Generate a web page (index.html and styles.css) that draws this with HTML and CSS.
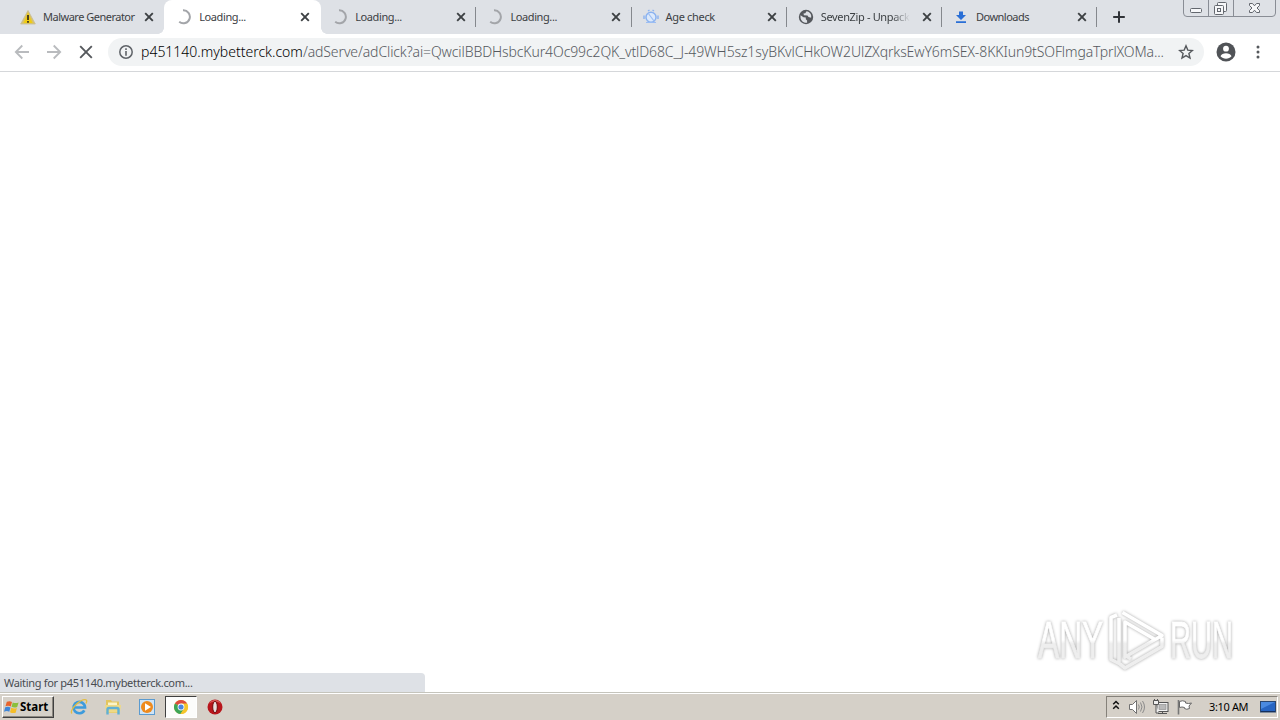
FILE: index.html
```
<!DOCTYPE html>
<html>
<head>
    <title>Loading...</title>
    <meta charset="utf-8">
    <meta name="viewport" content="width=device-width, initial-scale=1">
    <link rel="stylesheet" href="styles.css">
</head>

<body>
    <svg width="0" height="0" class="defs">
        <symbol id="close" viewBox="0 0 10 10"><path d="M1.2 1.2l7.6 7.6M8.8 1.2l-7.6 7.6" stroke="#3c4043" stroke-width="1.9"/></symbol>
        <symbol id="spinner" viewBox="0 0 16 16"><path d="M7 1.3A6.5 6.5 0 1 1 3.2 12.8" fill="none" stroke="#a3a5a9" stroke-width="2"/></symbol>
        <linearGradient id="wm-fill" x1="0" y1="0" x2="0" y2="62" gradientUnits="userSpaceOnUse">
            <stop offset=".5" stop-color="#ffffff"/>
            <stop offset=".56" stop-color="#eeeeee"/>
        </linearGradient>
    </svg>

    <div class="tabstrip">
        <div class="tab no-line">
            <svg class="favicon" viewBox="0 0 16 16"><path d="M8 1.5L15.3 15H.7z" fill="#d9c36a" stroke="#c8bd92" stroke-width=".8"/><path d="M8 3.5L12.5 14h-9z" fill="#f0cc12"/><path d="M8 6v5M8 12v1.7" stroke="#3d3520" stroke-width="1.8"/></svg>
            <span class="title malware">Malware Generator</span>
            <svg class="close"><use href="#close"/></svg>
        </div>
        <div class="tab active no-line">
            <svg class="favicon"><use href="#spinner"/></svg>
            <span class="title loading">Loading...</span>
            <svg class="close"><use href="#close"/></svg>
        </div>
        <div class="tab">
            <svg class="favicon"><use href="#spinner"/></svg>
            <span class="title loading">Loading...</span>
            <svg class="close"><use href="#close"/></svg>
        </div>
        <div class="tab">
            <svg class="favicon"><use href="#spinner"/></svg>
            <span class="title loading">Loading...</span>
            <svg class="close"><use href="#close"/></svg>
        </div>
        <div class="tab">
            <svg class="favicon" viewBox="0 0 16 16"><circle cx="8" cy="8.300" r="5" fill="#dce9fb" stroke="#8ab2f0" stroke-width="1.5"/><path d="M5 4l6 8M3 13.500h10" stroke="#9bbdf3" stroke-width="1.2"/><path d="M1 6.500v3.500M15 6.500v3.500M5 2l1.500-1M11 2L9.500 1" stroke="#8ab2f0" stroke-width="1.4"/></svg>
            <span class="title age">Age check</span>
            <svg class="close"><use href="#close"/></svg>
        </div>
        <div class="tab">
            <svg class="favicon" viewBox="0 0 16 16"><circle cx="8" cy="8" r="7.2" fill="#55585d"/><path d="M2.5 6.2l3 2.1 2.3.3v1.7l1.3 1.2v2.3C5 14.2 2 11.2 2.5 6.2zM8.5 2.2l-1.2 2-1.8.3.4 1.7 3.6.2 1 1.6 2.6.7C14 5.5 11.8 2.8 8.5 2.2z" fill="#dee1e6"/></svg>
            <span class="title fade">SevenZip - Unpack</span>
            <svg class="close"><use href="#close"/></svg>
        </div>
        <div class="tab">
            <svg class="favicon" viewBox="0 0 16 16"><path d="M6 2.5h4V6h3l-5 5L3 6h3zM3 12.2h10V14H3z" fill="#2a6fd6"/></svg>
            <span class="title down">Downloads</span>
            <svg class="close"><use href="#close"/></svg>
        </div>
        <svg class="new-tab" viewBox="0 0 12 12"><path d="M6 .2v11.6M.2 6h11.6" stroke="#303338" stroke-width="2"/></svg>
        <svg class="window-buttons" viewBox="0 0 94 18">
            <path d="M.5 0v13q0 3.500 3.500 3.500h85q3.500 0 3.500-3.500V0M25.500 0v16M50.500 0v16" fill="none" stroke="#898d95"/>
            <g fill="#f6f7f9" stroke="#63676e">
                <rect x="7.500" y="8.500" width="11" height="4" rx="1"/>
                <rect x="34.500" y="2.500" width="9" height="9" rx="1"/>
                <rect x="31.500" y="5.500" width="9" height="9" rx="1"/>
                <rect x="34.500" y="8.500" width="3" height="3"/>
                <path d="M66.500 3.500h3l2 2.300 2-2.300h3v2L74 8l2.500 2.500v2h-3l-2-2.300-2 2.300h-3v-2L69 8l-2.500-2.500z"/>
            </g>
        </svg>
    </div>

    <div class="toolbar">
        <svg class="nav" viewBox="0 0 16 16"><path d="M15 8H2M8.300 1.500L1.800 8l6.500 6.500" fill="none" stroke="#b9bbbe" stroke-width="1.800"/></svg>
        <svg class="nav" viewBox="0 0 16 16"><path d="M1 8h13M7.700 1.500L14.200 8l-6.500 6.500" fill="none" stroke="#b9bbbe" stroke-width="1.800"/></svg>
        <svg class="nav" viewBox="0 0 16 16"><path d="M2.200 2.200l11.600 11.600M13.800 2.200L2.200 13.800" stroke="#55585c" stroke-width="1.900"/></svg>
        <div class="omnibox">
            <svg class="info" viewBox="0 0 16 16"><circle cx="8" cy="8" r="6.200" fill="none" stroke="#5f6368" stroke-width="1.500"/><path d="M8 4.300v1.600M8 7v4.700" stroke="#5f6368" stroke-width="1.600"/></svg>
            <div class="url"><span class="host">p451140.mybetterck.com</span><span class="path">/adServe/adClick?ai=QwcilBBDHsbcKur4Oc99c2QK_vtlD68C_J-49WH5sz1syBKvlCHkOW2UlZXqrksEwY6mSEX-8KKIun9tSOFlmgaTprlXOMa...</span></div>
            <svg class="star" viewBox="0 0 16 16"><path d="M8 1.800l1.800 4.300 4.600.4-3.500 3 1.100 4.500L8 11.600 4 14l1.100-4.500-3.500-3 4.600-.4z" fill="none" stroke="#55585c" stroke-width="1.400"/></svg>
        </div>
        <svg class="avatar" viewBox="0 0 20 20"><circle cx="10" cy="10" r="9.500" fill="#505357"/><circle cx="10" cy="6.700" r="2.900" fill="#fff"/><path d="M4.500 14.200c1.200-4 9.800-4 11 0-2.600 3.300-8.400 3.300-11 0z" fill="#fff"/></svg>
        <svg class="menu" viewBox="0 0 4 16"><g fill="#55585c"><circle cx="2" cy="3" r="1.500"/><circle cx="2" cy="8" r="1.500"/><circle cx="2" cy="13" r="1.500"/></g></svg>
    </div>

    <div class="page">
        <div class="watermark">
            <span class="wm-text any">ANY</span>
            <svg class="wm-logo" viewBox="0 0 58 62"><path d="M14.500 3.500L54 26.500 17 48V13l31 18M9 6l-6 2.500v42l8 4V9M12 55l5 4 37-21.500v-9M17 46l6 4" fill="none" stroke="url(#wm-fill)" stroke-width="3.600" stroke-linejoin="round"/></svg>
            <span class="wm-text run">RUN</span>
        </div>
        <div class="status"><span>Waiting for p451140.mybetterck.com...</span></div>
    </div>

    <div class="taskbar">
        <div class="start">
            <svg viewBox="0 0 17 16"><path d="M3 2.500q3-1.500 5.500.2L7.200 7.500Q4.500 6 1.600 7.300z" fill="#e8642c"/><path d="M9.300 3.100q3 1.500 6.200 0L14 8q-3 1.300-6-.2z" fill="#8bbf3c"/><path d="M1.300 8.300q3-1.300 5.600.2L5.600 13Q3 11.600 0 13z" fill="#3f86d8"/><path d="M7.700 8.900q3 1.400 6 .1L12.400 14q-3 1-6-.5z" fill="#f5bd28"/></svg>
            <b>Start</b>
        </div>
        <svg class="launch ie" viewBox="0 0 18 18"><path d="M14.300 12.300A5.700 5.700 0 1 1 15 9.500H4.500" fill="none" stroke="#3d9bdc" stroke-width="2.700"/><path d="M2 15.500C-1.500 12.500 10.500.5 16 1.800c1.300.5.700 2.200 0 3.700" fill="none" stroke="#e2bd42" stroke-width="1.300"/></svg>
        <svg class="launch" viewBox="0 0 18 18"><path d="M2 2h5l1 1.500h7V15H2z" fill="#e3c55e"/><path d="M4 4.500h9v3H4z" fill="#fbf4c9"/><path d="M1 7h16l-1 7.500H2z" fill="#eed985"/><path d="M3.500 16.500v-5q0-1.500 1.500-1.500h8q1.500 0 1.500 1.500v5" fill="none" stroke="#5fb0d6" stroke-width="2.400"/></svg>
        <svg class="launch" viewBox="0 0 18 18"><rect x="1.500" y="1.500" width="15" height="15" fill="#cfe4f6" stroke="#5b9bd0"/><circle cx="9" cy="9" r="6" fill="#ee8a1d"/><path d="M7 5.300v7.400L13 9z" fill="#fff"/></svg>
        <div class="running">
            <svg viewBox="0 0 16 16"><circle cx="8" cy="8" r="7" fill="#f5c52c"/><path d="M8 8L1.900 4.500A7 7 0 0 1 14.100 4.500H8z" fill="#dd4b3e"/><path d="M8 8L1.900 4.500A7 7 0 0 0 7.500 15L11 9.700z" fill="#3da557"/><path d="M8 8l6.100-3.500A7 7 0 0 1 7.500 15L11 9.700z" fill="#f5c52c"/><circle cx="8" cy="8" r="3.400" fill="#fff"/><circle cx="8" cy="8" r="2.600" fill="#4a86e0"/></svg>
        </div>
        <svg class="launch opera" viewBox="0 0 18 18"><circle cx="9" cy="9" r="7.500" fill="#b8151b"/><path d="M3 5.500a7 7 0 0 1 12 0q-6-4-12 0z" fill="#d95a58"/><ellipse cx="9" cy="9" rx="2.300" ry="5.700" fill="#e9dedd" stroke="#6f080c"/></svg>

        <div class="tray">
            <svg class="chevrons" viewBox="0 0 8 10"><path d="M1.200 4.300L4 1.500l2.800 2.800M1.200 8.800L4 6l2.800 2.800" fill="none" stroke="#111" stroke-width="1.500"/></svg>
            <svg class="speaker" viewBox="0 0 18 16"><path d="M1.500 5.500h3l4-4v13l-4-4h-3z" fill="#fff" stroke="#707070"/><path d="M10.500 5.500q1.500 2.500 0 5M12.500 3.500q3 4.500 0 9M14.500 2q4 6 0 12" fill="none" stroke="#8b8b8b"/></svg>
            <svg class="network" viewBox="0 0 17 16"><rect x="5" y="3.500" width="11" height="9" fill="#f2f2f2" stroke="#555"/><rect x="7" y="5.500" width="7" height="5" fill="#b9b9b9" stroke="#888" stroke-width=".6"/><path d="M6 14.500h9M10.500 12.500v2" stroke="#555"/><path d="M1.500 1.500h5v4h-5zM4 5.500V14h3M2.500 0v2M5.500 0v2" fill="#eee" stroke="#555"/></svg>
            <svg class="flag" viewBox="0 0 18 16"><path d="M2.500 1v14.500" stroke="#777" stroke-width="1.600"/><path d="M3.500 2.500q3-1.500 6 0V4q3 1 6 0l-2.500 3 .5 2.500q-3 1.500-5 0V8.500q-2.500-1-5 0z" fill="#fff" stroke="#666"/></svg>
            <span class="clock">3:10 AM</span>
            <svg class="desktop" viewBox="0 0 16 14"><rect x=".5" y="1.500" width="15" height="10.500" fill="#2765c2" stroke="#29466f"/><path d="M1 2h14L1 9z" fill="#4a8ae0"/><path d="M1 11.500h14" stroke="#16305c"/></svg>
        </div>
    </div>
</body>
</html>
```
FILE: styles.css
```
* {
    box-sizing: border-box;
}

body {
    margin: 0;
    width: 1280px;
    height: 720px;
    display: flex;
    flex-direction: column;
    overflow: hidden;
    background-color: #ffffff;
    font-family: "Noto Sans", "DejaVu Sans", sans-serif;
    font-size: 11px;
    color: #3c4043;
}

svg {
    display: block;
    flex: none;
}

.defs {
    position: absolute;
}

.tabstrip {
    display: flex;
    height: 34px;
    padding-left: 9px;
    background-color: #dee1e6;
}

.tab {
    display: flex;
    align-items: center;
    width: 155.2px;
    padding-left: 11px;
    background: linear-gradient(#85888d, #85888d) right center / 1px 20px no-repeat;
}

.no-line {
    background: none;
}

/* the flared bottom corners are drawn by the two pseudo elements */
.active {
    position: relative;
    width: 157px;
    padding-left: 12px;
    background-color: #ffffff;
    border-radius: 8px 8px 0 0;
}

.active::before, .active::after {
    content: "";
    position: absolute;
    bottom: 0;
    width: 6px;
    height: 6px;
}

.active::before {
    left: -6px;
    background: radial-gradient(circle at 0 0, transparent 5.5px, #ffffff 6px);
}

.active::after {
    right: -6px;
    background: radial-gradient(circle at 100% 0, transparent 5.5px, #ffffff 6px);
}

.favicon {
    width: 16px;
    height: 16px;
}

.title {
    width: 93px;
    margin-left: 7px;
    white-space: nowrap;
    line-height: 16px;
    letter-spacing: -.35px;
}

.loading {
    letter-spacing: -.4px;
}

.age {
    letter-spacing: -.33px;
}

.malware, .down {
    letter-spacing: -.5px;
}

.fade {
    width: 89px;
    margin-right: 4px;
    overflow: hidden;
    -webkit-mask-image: linear-gradient(to right, #000 80%, transparent);
}

.close {
    width: 10px;
    height: 10px;
    margin-left: 8px;
}

.new-tab {
    width: 12px;
    height: 12px;
    margin: 11px 0 0 16px;
}

.window-buttons {
    width: 94px;
    height: 18px;
    margin-left: auto;
    margin-right: 3px;
}

.toolbar {
    display: flex;
    align-items: center;
    height: 38px;
    padding: 0 20px 1px 14px;
    border-bottom: 1px solid #d5d7da;
}

.nav {
    width: 16px;
    height: 16px;
    margin-right: 16px;
}

.omnibox {
    display: flex;
    align-items: center;
    width: 1096px;
    height: 28px;
    margin-left: -2px;
    padding: 0 10px;
    border-radius: 14px;
    background-color: #f1f3f4;
}

.info, .star {
    width: 16px;
    height: 16px;
}

.url {
    width: 1030px;
    margin-left: 7px;
    font-size: 14px;
    font-weight: 300;
    white-space: nowrap;
    line-height: 20px;
}

.host {
    color: #000000;
}

.path {
    color: #55595e;
    letter-spacing: -.107px;
}

.star {
    margin-left: 7px;
}

.avatar {
    width: 20px;
    height: 20px;
    margin-left: 12px;
}

.menu {
    width: 4px;
    height: 16px;
    margin-left: auto;
}

.page {
    flex: 1;
    display: flex;
    flex-direction: column;
    justify-content: flex-end;
}

.watermark {
    display: flex;
    align-items: center;
    align-self: flex-end;
    width: 242px;
    height: 62px;
    margin-bottom: 2px;
    filter: drop-shadow(0 0 1.500px rgba(0, 0, 0, .36));
}

.wm-text {
    font-family: "Liberation Sans", sans-serif;
    font-size: 52px;
    line-height: 62px;
    background: linear-gradient(#ffffff 50%, #eeeeee 56%);
    -webkit-background-clip: text;
    color: transparent;
    -webkit-text-stroke: 1px transparent;
    white-space: nowrap;
}

.any, .run {
    flex: none;
    width: 108px;
    margin-right: -42px;
    transform: scaleX(.61);
    transform-origin: left;
}

.run {
    width: 114px;
    margin-right: 0;
    transform: scaleX(.56);
}

.wm-logo {
    width: 58px;
    height: 62px;
    margin: 0 4px 0 4px;
}

.status {
    width: 425px;
    height: 19px;
    padding-left: 4px;
    border-radius: 0 4px 0 0;
    background-color: #dee1e6;
    line-height: 20px;
    letter-spacing: -.31px;
    color: #484b50;
}

.taskbar {
    display: flex;
    align-items: center;
    height: 28px;
    padding: 2px 2px 2px;
    border-top: 1px solid #c5c4bc;
    background-color: #d5d0c8;
    box-shadow: inset 0 1px #ffffff;
}

.start {
    display: flex;
    align-items: center;
    width: 52px;
    height: 22px;
    padding-left: 1px;
    border: 1px solid;
    border-color: #ffffff #404040 #404040 #ffffff;
    box-shadow: inset -1px -1px #8b8780;
    font-size: 11.500px;
    color: #000000;
}

.start svg {
    width: 16px;
    height: 16px;
}

.launch {
    width: 18px;
    height: 18px;
    margin-left: 16px;
}

.running {
    width: 32px;
    height: 22px;
    margin: 0 8px 0 9px;
    padding: 2px 7px;
    border: 1px solid;
    border-color: #404040 #ffffff #ffffff #404040;
    background-color: #fcfcfb;
}

.running svg {
    width: 16px;
    height: 16px;
}

.opera {
    margin-left: 1px;
}

.tray {
    display: flex;
    align-items: center;
    width: 172px;
    height: 22px;
    margin-left: auto;
    padding-left: 5px;
    border: 1px solid;
    border-color: #85817a #ffffff #ffffff #85817a;
    color: #000000;
}

.chevrons {
    width: 8px;
    height: 10px;
    margin-top: -3px;
}

.speaker {
    width: 18px;
    height: 16px;
    margin-left: 8px;
}

.network {
    width: 17px;
    height: 16px;
    margin-left: 6px;
}

.flag {
    width: 18px;
    height: 16px;
    margin-left: 7px;
}

.clock {
    width: 41px;
    margin-left: 15px;
    white-space: nowrap;
    letter-spacing: -.35px;
}

.desktop {
    width: 16px;
    height: 14px;
    margin-left: 10px;
}
```
